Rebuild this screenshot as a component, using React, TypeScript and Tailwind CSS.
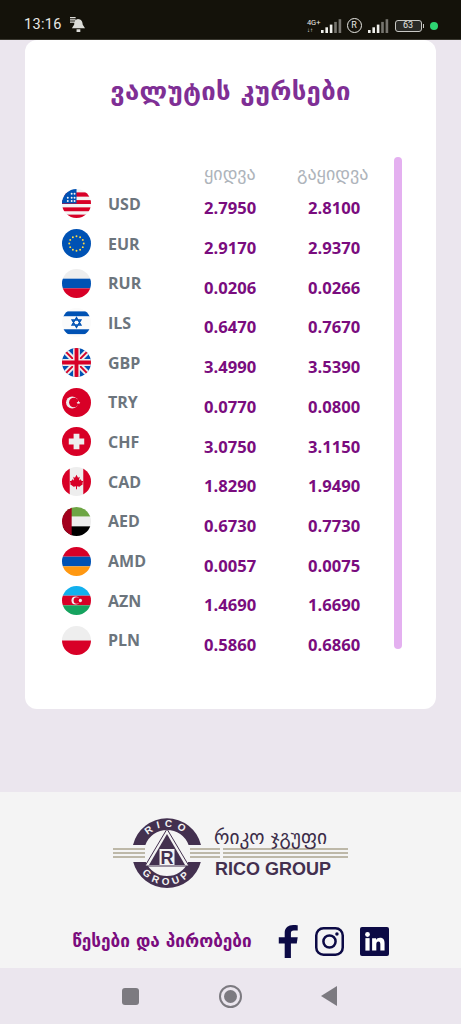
import type { ReactNode } from "react";

const rates = [
  { code: "USD", buy: "2.7950", sell: "2.8100" },
  { code: "EUR", buy: "2.9170", sell: "2.9370" },
  { code: "RUR", buy: "0.0206", sell: "0.0266" },
  { code: "ILS", buy: "0.6470", sell: "0.7670" },
  { code: "GBP", buy: "3.4990", sell: "3.5390" },
  { code: "TRY", buy: "0.0770", sell: "0.0800" },
  { code: "CHF", buy: "3.0750", sell: "3.1150" },
  { code: "CAD", buy: "1.8290", sell: "1.9490" },
  { code: "AED", buy: "0.6730", sell: "0.7730" },
  { code: "AMD", buy: "0.0057", sell: "0.0075" },
  { code: "AZN", buy: "1.4690", sell: "1.6690" },
  { code: "PLN", buy: "0.5860", sell: "0.6860" },
];

const stars = Array.from({ length: 12 }, (_, i) => {
  const a = (i * Math.PI) / 6;
  return { x: 15 + Math.sin(a) * 7.5, y: 15 - Math.cos(a) * 7.5 };
});

const flagArt: Record<string, ReactNode> = {
  USD: (
    <>
      <rect width="30" height="30" fill="#f4f4f4" />
      <rect y="3.5" width="30" height="4.4" fill="#d80027" />
      <rect y="11.5" width="30" height="4" fill="#d80027" />
      <rect y="19" width="30" height="4" fill="#d80027" />
      <rect y="26.5" width="30" height="4" fill="#d80027" />
      <rect width="15" height="15" fill="#0052b4" />
      <g fill="#f4f4f4">
        <circle cx="6" cy="9" r="1" />
        <circle cx="10" cy="9" r="1" />
        <circle cx="13" cy="9" r="1" />
        <circle cx="6" cy="12.5" r="1" />
        <circle cx="10" cy="12.5" r="1" />
        <circle cx="13" cy="12.5" r="1" />
        <circle cx="10" cy="5" r="1" />
        <circle cx="13" cy="5" r="1" />
      </g>
    </>
  ),
  EUR: (
    <>
      <rect width="30" height="30" fill="#0052b4" />
      {stars.map((s, i) => (
        <circle key={i} cx={s.x} cy={s.y} r="1" fill="#ffda44" />
      ))}
    </>
  ),
  RUR: (
    <>
      <rect width="30" height="10" fill="#eeeeee" />
      <rect y="10" width="30" height="10" fill="#0052b4" />
      <rect y="20" width="30" height="10" fill="#d80027" />
    </>
  ),
  ILS: (
    <>
      <rect width="30" height="30" fill="#fbfbfb" />
      <rect y="3.5" width="30" height="5" fill="#0052b4" />
      <rect y="22" width="30" height="5" fill="#0052b4" />
      <path d="M15 9.8 L19.6 17.6 H10.4 Z M15 20.2 L10.4 12.4 H19.6 Z" fill="none" stroke="#0052b4" strokeWidth="1.4" />
    </>
  ),
  GBP: (
    <>
      <rect width="30" height="30" fill="#0052b4" />
      <path d="M0 0 L30 30 M30 0 L0 30" stroke="#eeeeee" strokeWidth="6" />
      <path d="M0 0 L30 30 M30 0 L0 30" stroke="#d80027" strokeWidth="2" />
      <path d="M15 0 V30 M0 15 H30" stroke="#eeeeee" strokeWidth="7" />
      <path d="M15 0 V30 M0 15 H30" stroke="#d80027" strokeWidth="4" />
    </>
  ),
  TRY: (
    <>
      <rect width="30" height="30" fill="#d80027" />
      <circle cx="10.5" cy="15" r="6.3" fill="#eeeeee" />
      <circle cx="12.3" cy="15" r="5" fill="#d80027" />
      <path d="M17 13 L17.6 14.4 L19 14.5 L17.9 15.4 L18.3 16.8 L17 16 L15.7 16.8 L16.1 15.4 L15 14.5 L16.4 14.4 Z" fill="#eeeeee" />
    </>
  ),
  CHF: (
    <>
      <rect width="30" height="30" fill="#d80027" />
      <path d="M12 7 H18 V12 H23 V18 H18 V23 H12 V18 H7 V12 H12 Z" fill="#eeeeee" />
    </>
  ),
  CAD: (
    <>
      <rect width="30" height="30" fill="#eeeeee" />
      <rect width="8" height="30" fill="#d80027" />
      <rect x="22" width="8" height="30" fill="#d80027" />
      <path d="M15 8 L16.6 11 L18.3 10.2 L17.6 14 L19.2 12.8 L20.4 14.6 L22 14.4 L21 17 L21.8 17.6 L18 20.4 L15.5 20 V23 H14.5 V20 L12 20.4 L8.2 17.6 L9 17 L8 14.4 L9.6 14.6 L10.8 12.8 L12.4 14 L11.7 10.2 L13.4 11 Z" fill="#d80027" />
    </>
  ),
  AED: (
    <>
      <rect width="30" height="10" fill="#6da544" />
      <rect y="10" width="30" height="10" fill="#eeeeee" />
      <rect y="20" width="30" height="10" fill="#000000" />
      <rect width="10" height="30" fill="#a2001d" />
    </>
  ),
  AMD: (
    <>
      <rect width="30" height="10" fill="#d80027" />
      <rect y="10" width="30" height="10" fill="#0052b4" />
      <rect y="20" width="30" height="10" fill="#ff9811" />
    </>
  ),
  AZN: (
    <>
      <rect width="30" height="10" fill="#12b0ee" />
      <rect y="10" width="30" height="10" fill="#d80027" />
      <rect y="20" width="30" height="10" fill="#16a35f" />
      <circle cx="14" cy="15" r="4.2" fill="#eeeeee" />
      <circle cx="15.4" cy="15" r="3.4" fill="#d80027" />
      <circle cx="19" cy="15" r="1.7" fill="#eeeeee" />
    </>
  ),
  PLN: (
    <>
      <rect width="30" height="15" fill="#eeeeee" />
      <rect y="15" width="30" height="15" fill="#d80027" />
    </>
  ),
};

function Flag({ code }: { code: string }) {
  return (
    <svg viewBox="0 0 30 30" className="w-[29px] h-[29px] shrink-0">
      <clipPath id={`clip-${code}`}>
        <circle cx="15" cy="15" r="15" />
      </clipPath>
      <g clipPath={`url(#clip-${code})`}>{flagArt[code]}</g>
    </svg>
  );
}

function Signal({ bars }: { bars: number }) {
  return (
    <svg viewBox="0 0 21 14" className="w-[21px] h-[14px]">
      {[0, 1, 2, 3, 4].map((i) => (
        <rect
          key={i}
          x={i * 4.4}
          y={11 - i * 2.7}
          width="2.6"
          height={3 + i * 2.7}
          fill={i < bars ? "#f0f0ec" : "#77756f"}
        />
      ))}
    </svg>
  );
}

function StatusBar() {
  return (
    <div className="h-10 bg-[#14120a] flex items-end pb-[4px] pl-6 pr-[23px] text-[#e8e8e4] shrink-0 border-b border-[#3a3830]">
      <span className="text-[14.5px] leading-[20px] tracking-[0.3px] font-['Roboto',sans-serif]">13:16</span>
      <svg viewBox="0 0 16 16" className="w-[15px] h-[15px] ml-[8px] mb-[3px]">
        <path d="M0 0h6v1.2H0z M0 2.4h6v1.2H0z M0 4.8h6V6H0z M8.5 2 c3.5 0 5 3 5 6 l2.5 4 H2 l2.5-4 c0-3 1.500-6 4-6z M7 13h4v3H7z" fill="#dcdcd8" />
      </svg>
      <div className="ml-auto flex items-center mb-[2px]">
        <div className="flex flex-col items-start leading-none">
          <span className="text-[7.5px] leading-[8px] font-['Roboto',sans-serif]">4G+</span>
          <span className="text-[6px] leading-[6px] font-['Roboto',sans-serif]">↓↑</span>
        </div>
        <Signal bars={3} />
        <span className="ml-[5px] w-[15px] h-[15px] rounded-full border-[1.5px] border-[#e8e8e4] flex items-center justify-center text-[9px] font-['Roboto',sans-serif]">
          R
        </span>
        <div className="ml-[6px]">
          <Signal bars={3} />
        </div>
        <div className="ml-[6px] w-[27px] h-[12px] rounded-[3px] border border-[#c8c8c4] flex items-center justify-center text-[9px] font-['Roboto',sans-serif] bg-[#2a2a26]">
          63
        </div>
        <span className="w-[1.5px] h-[4px] bg-[#c8c8c4] ml-[1px]" />
        <span className="ml-[6px] w-[8px] h-[8px] rounded-full bg-[#2ed573]" />
      </div>
    </div>
  );
}

function RicoLogo() {
  return (
    <svg viewBox="0 0 240 76" className="w-[240px] h-[76px]">
      <defs>
        <path id="ring-top" d="M30 39 A26 26 0 0 1 82 39" />
        <path id="ring-bottom" d="M24 39 A32 32 0 0 0 88 39" />
      </defs>
      <path d="M22 31 A35 35 0 0 1 90 31 H77.600 A23 23 0 0 0 34.400 31 Z" fill="#43304f" />
      <path d="M22.200 48 A35 35 0 0 0 89.800 48 H77.200 A23 23 0 0 1 34.800 48 Z" fill="#43304f" />
      <text fontSize="10" fontWeight="700" fill="#f3f3f3" letterSpacing="4.5" fontFamily="'Liberation Sans',sans-serif">
        <textPath href="#ring-top" startOffset="50%" textAnchor="middle">RICO</textPath>
      </text>
      <text fontSize="10" fontWeight="700" fill="#f3f3f3" letterSpacing="4" fontFamily="'Liberation Sans',sans-serif">
        <textPath href="#ring-bottom" startOffset="50%" textAnchor="middle">GROUP</textPath>
      </text>
      <g stroke="#bdb8a8" strokeWidth="2.200">
        <path d="M2 35 H34 M2 39 H34 M2 43 H34" />
        <path d="M79 35 H109 M79 39 H109 M79 43 H109" />
        <path d="M112 35 H237 M112 39 H237 M112 43 H237" />
      </g>
      <path d="M56 15 L78 52 H34 Z" fill="#f3f3f3" stroke="#43304f" strokeWidth="1" />
      <path d="M56 20 L74 51 H38 Z" fill="#43304f" />
      <rect x="48.500" y="35" width="15" height="16" fill="#f3f3f3" />
      <text x="56" y="50" textAnchor="middle" fontSize="18" fontWeight="700" fill="#43304f" fontFamily="'Liberation Sans',sans-serif">R</text>
      <text x="103" y="30" fontSize="19.400" fill="#3b2c48" fontFamily="'DejaVu Sans',sans-serif">რიკო ჯგუფი</text>
      <text x="104" y="61" fontSize="18" fontWeight="700" fill="#43304f" fontFamily="'Liberation Sans',sans-serif">RICO GROUP</text>
    </svg>
  );
}

function SocialIcons() {
  return (
    <div className="flex items-center ml-[26px]">
      <svg viewBox="0 0 20 34" className="w-[20px] h-[33px]">
        <path d="M13 34 V19 H19 L20 12.5 H13 V8.5 C13 6.7 13.8 5.7 16 5.7 H20 V0.3 C19 0.2 17.4 0 15.4 0 C10.2 0 6.6 3.1 6.6 8 V12.5 H0.5 V19 H6.6 V34 Z" fill="#0c0a45" />
      </svg>
      <svg viewBox="0 0 30 30" className="w-[29px] h-[29px] ml-[17px]">
        <rect x="1.3" y="1.3" width="27.4" height="27.4" rx="7.5" fill="none" stroke="#0c0a45" strokeWidth="2.6" />
        <circle cx="15" cy="15" r="6.3" fill="none" stroke="#0c0a45" strokeWidth="2.6" />
        <circle cx="22.7" cy="7.3" r="1.8" fill="#0c0a45" />
      </svg>
      <div className="w-[29px] h-[29px] ml-[16px] rounded-[2px] bg-[#0c0a45] flex items-center justify-center">
        <svg viewBox="0 0 24 24" className="w-[23px] h-[23px]">
          <rect x="2.5" y="8.5" width="4.4" height="13" fill="#ffffff" />
          <circle cx="4.7" cy="4.7" r="2.5" fill="#ffffff" />
          <path d="M9.5 8.5 H13.6 V10.4 C14.3 9.2 15.8 8.2 17.8 8.2 C21.3 8.2 22.5 10.4 22.5 14 V21.5 H18.1 V14.9 C18.1 13.2 17.6 12 16.1 12 C14.6 12 13.9 13.2 13.9 14.9 V21.5 H9.5 Z" fill="#ffffff" />
        </svg>
      </div>
    </div>
  );
}

export default function App() {
  return (
    <div className="w-[461px] h-[1024px] overflow-hidden bg-[#ebe6ee] flex flex-col font-['Open_Sans',sans-serif]">
      <StatusBar />

      <div className="h-[752px] shrink-0 px-[25px]">
        <div className="bg-white rounded-xl h-[669px] pt-[32px] pl-[37px] pr-[34px]">
          <h1 className="text-center text-[#7f2f95] text-[25.7px] leading-[38px] font-bold font-['DejaVu_Sans',sans-serif] pr-[3px] tracking-[0.3px]">
            ვალუტის კურსები
          </h1>

          <div className="flex mt-[47px]">
            <div className="flex-1">
              <div className="flex h-[19px] mt-[7px] mb-[1px] text-[#aeb4bb] text-[18px] leading-[19px] font-['DejaVu_Sans',sans-serif]">
                <span className="ml-[142px] w-[93px]">ყიდვა</span>
                <span>გაყიდვა</span>
              </div>
              <div>
                {rates.map((r) => (
                  <div key={r.code} className="flex items-center h-[39.7px]">
                    <Flag code={r.code} />
                    <span className="ml-[17px] w-[96px] text-[16px] font-bold text-[#6c757d]">{r.code}</span>
                    <span className="w-[104px] mt-[10px] text-[16.6px] font-bold text-[#7a0c7e]">{r.buy}</span>
                    <span className="mt-[10px] text-[16.6px] font-bold text-[#7a0c7e]">{r.sell}</span>
                  </div>
                ))}
              </div>
            </div>
            <div className="w-[8px] h-[492px] rounded-full bg-[#e4b0f0]" />
          </div>
        </div>
      </div>

      <div className="h-[176px] shrink-0 bg-[#f4f4f4] flex flex-col items-center">
        <div className="mt-[22px] h-[76px]">
          <RicoLogo />
        </div>
        <div className="flex items-center mt-[35px]">
          <span className="text-[17.2px] leading-[33px] font-bold text-[#7a0c7e] font-['DejaVu_Sans',sans-serif]">წესები და პირობები</span>
          <SocialIcons />
        </div>
      </div>

      <div className="h-[56px] shrink-0 flex items-center">
        <div className="ml-[122px] w-[17px] h-[17px] rounded-[3px] bg-[#7c7a80]" />
        <div className="ml-[80px] w-[23px] h-[23px] rounded-full border-[2px] border-[#7c7a80] flex items-center justify-center">
          <div className="w-[13px] h-[13px] rounded-full bg-[#7c7a80]" />
        </div>
        <svg viewBox="0 0 16 20" className="ml-[79px] w-[16px] h-[20px]">
          <path d="M16 0 V20 L0 10 Z" fill="#7c7a80" />
        </svg>
      </div>
    </div>
  );
}
